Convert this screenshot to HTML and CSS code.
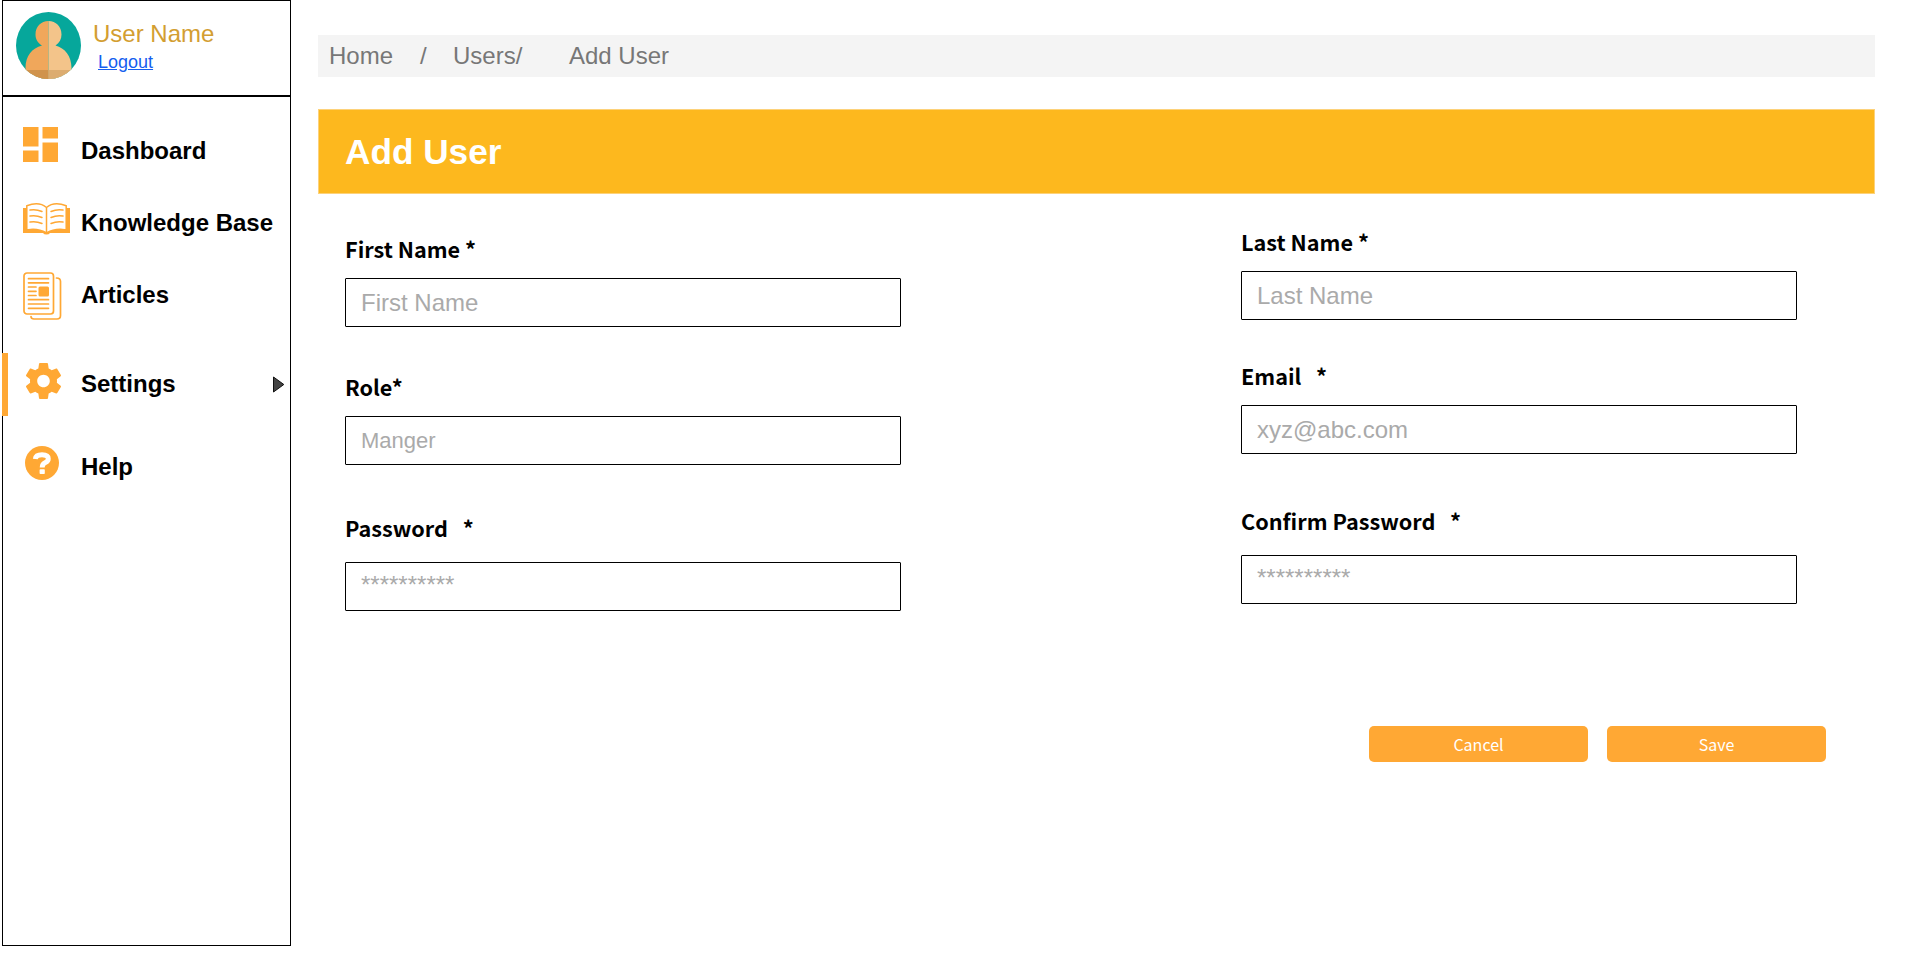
FILE: index.html
```html
<!DOCTYPE html>
<html lang="en">
<head>
<meta charset="utf-8">
<title>Add User</title>
<link rel="stylesheet" href="styles.css">
</head>
<body>
<div class="app">
  <aside class="sidebar">
    <div class="profile">
      <svg class="avatar" width="65" height="67" viewBox="0 0 65 67">
        <defs>
          <clipPath id="disc"><ellipse cx="32.500" cy="33.500" rx="32.500" ry="33.500"/></clipPath>
          <clipPath id="person"><path d="M32.500 9C25 9 19.500 14.500 19.500 22.500C19.500 27 21.500 31 26 33.500C16 36 9.500 44 9.500 56V67H55.500V56C55.500 44 49 36 39.500 33.500C43.500 31 45.500 27 45.500 22.500C45.500 14.500 40 9 32.500 9Z"/></clipPath>
        </defs>
        <g clip-path="url(#disc)">
          <rect width="65" height="67" fill="#06a79b"/>
          <g clip-path="url(#person)">
            <rect width="32.500" height="67" fill="#f0a75b"/>
            <rect x="32.500" width="33" height="67" fill="#f3c48a"/>
            <rect y="58" width="32.500" height="9" fill="#d0934c"/>
            <rect x="32.500" y="58" width="33" height="9" fill="#dcac70"/>
          </g>
        </g>
      </svg>
      <div class="identity">
        <span class="user-name">User Name</span>
        <a class="logout" href="#">Logout</a>
      </div>
    </div>
    <nav class="nav">
      <a class="nav-item dashboard">
        <svg class="icon" width="35" height="35" viewBox="0 0 35 35" fill="#ffa834"><path d="M0 0H15.500V19.500H0ZM19.500 0H35V11.500H19.500ZM19.500 15.500H35V35H19.500ZM0 23.500H15.500V35H0Z"/></svg>
        <span class="nav-label">Dashboard</span>
      </a>
      <a class="nav-item knowledge">
        <svg class="icon" width="47" height="32" viewBox="0 0 47 32">
          <path d="M0 5H4V26Q15 24 23.500 29Q32 24 43 26V5H47V30H27Q26 31.500 23.500 31.500T20 30H0Z" fill="#ffa834"/>
          <path d="M3.800 26V3Q16-2 23.500 4.500Q31-2 43.200 3V26Q32 22.500 23.500 28Q15 22.500 3.800 26Z" fill="#fff"/>
          <g fill="none" stroke="#ffa834" stroke-width="1.500" stroke-linecap="round"><path d="M3.800 26V2.800Q16-1.800 23.500 4.500Q31-1.800 43.200 2.800V26M23.500 4.500V29"/><path d="M7 7Q13 5.800 19 8.500M7 13Q13 11.800 19 14.500M7 19Q13 17.800 19 20.500M40 7Q34 5.800 28 8.500M40 13Q34 11.800 28 14.500M40 19Q34 17.800 28 20.500"/></g>
        </svg>
        <span class="nav-label">Knowledge Base</span>
      </a>
      <a class="nav-item articles">
        <svg class="icon" width="39" height="48" viewBox="0 0 39 48" fill="none" stroke="#ffa834" stroke-width="1.700" stroke-linecap="round">
          <rect x="1" y="1" width="29.500" height="41" rx="3"/>
          <path d="M33.500 6Q37.500 6 37.500 9.500V43.500Q37.500 47 34 47H11Q8 47 8 44.500"/>
          <path d="M5.500 6.700H25.500M5.500 10.800H25.500M5.500 15H13M5.500 19.300H13M5.500 23.500H13M5.500 27.700H25.500M5.500 32H25.500M5.500 36.300H25.500"/>
          <rect x="15.500" y="14.500" width="10.500" height="10" rx="1.500" fill="#ffa834" stroke="none"/>
        </svg>
        <span class="nav-label">Articles</span>
      </a>
      <a class="nav-item settings">
        <svg class="icon" width="35" height="36" viewBox="2.270 2 19.460 20" preserveAspectRatio="none" fill="#ffa834"><path d="M19.430 12.980c.04-.32.07-.64.07-.98s-.03-.66-.07-.98l2.110-1.650c.19-.15.24-.42.12-.64l-2-3.460c-.12-.22-.39-.3-.61-.22l-2.490 1c-.52-.4-1.080-.73-1.690-.98l-.38-2.650C14.460 2.180 14.250 2 14 2h-4c-.25 0-.46.18-.49.42l-.38 2.650c-.61.25-1.170.59-1.690.98l-2.490-1c-.23-.09-.49 0-.61.22l-2 3.460c-.13.22-.07.49.12.64l2.110 1.650c-.04.32-.07.65-.07.98s.03.66.07.98l-2.110 1.650c-.19.15-.24.42-.12.64l2 3.460c.12.22.39.3.61.22l2.490-1c.52.4 1.080.73 1.690.98l.38 2.650c.03.24.24.42.49.42h4c.25 0 .46-.18.49-.42l.38-2.650c.61-.25 1.170-.59 1.690-.98l2.490 1c.23.09.49 0 .61-.22l2-3.460c.12-.22.07-.49-.12-.64l-2.110-1.650zM12 15.500c-1.930 0-3.500-1.570-3.500-3.500s1.570-3.500 3.500-3.500 3.500 1.570 3.500 3.500-1.570 3.500-3.500 3.500z"/></svg>
        <span class="nav-label">Settings</span>
        <svg class="caret" width="12" height="17" viewBox="0 0 12 17"><path d="M.500 1V16L10.800 8.500Z" fill="#444" stroke="#111"/></svg>
      </a>
      <a class="nav-item help">
        <svg class="icon" width="34" height="34" viewBox="0 0 34 34"><circle cx="17" cy="17" r="17" fill="#ffa834"/><path d="M10.300 13Q10.800 8.700 17 8.700Q23.300 8.700 23.300 12.800Q23.300 15.300 20.400 16.600Q17.200 18.100 17.200 21.500" fill="none" stroke="#fff" stroke-width="4.900"/><rect x="14.600" y="23.300" width="5.200" height="4.700" rx=".8" fill="#fff"/></svg>
        <span class="nav-label">Help</span>
      </a>
    </nav>
  </aside>
  <main class="content">
    <div class="breadcrumb"><span class="crumb-home">Home</span><span class="crumb-sep">/</span><span class="crumb-users">Users/</span><span>Add User</span></div>
    <h1 class="title">Add User</h1>
    <form class="form">
      <div class="column left">
        <div class="field"><label>First Name *</label><input placeholder="First Name"></div>
        <div class="field"><label>Role*</label><input class="role-input" placeholder="Manger"></div>
        <div class="field password"><label>Password &nbsp;&nbsp;*</label><input placeholder="**********"></div>
      </div>
      <div class="column right">
        <div class="field"><label>Last Name *</label><input placeholder="Last Name"></div>
        <div class="field"><label>Email &nbsp;&nbsp;*</label><input placeholder="xyz@abc.com"></div>
        <div class="field password"><label>Confirm Password &nbsp;&nbsp;*</label><input placeholder="**********"></div>
      </div>
    </form>
    <div class="actions">
      <button type="button">Cancel</button>
      <button type="button">Save</button>
    </div>
  </main>
</div>
</body>
</html>
```
FILE: styles.css
```css
* { box-sizing: border-box; }
body {
  margin: 0;
  background: #fff;
  font-family: "Liberation Sans", Arial, sans-serif;
  font-size: 24px;
  line-height: 28px;
}
.app { display: flex; height: 955px; padding-left: 2px; }
.sidebar {
  flex: none;
  width: 289px;
  height: 946px;
  border: 1px solid #000;
}
.profile {
  display: flex;
  height: 96px;
  padding: 11px 0 0 13px;
  border-bottom: 2px solid #000;
}
.avatar { display: block; flex: none; }
.identity { display: flex; flex-direction: column; align-items: flex-start; padding: 8px 0 0 12px; }
.user-name { color: #d39e31; }
.logout { margin-left: 5px; font-size: 18px; line-height: 29px; color: #155eef; text-decoration: underline; }

.nav { display: flex; flex-direction: column; }
.nav-item {
  display: flex;
  align-items: flex-start;
  height: 72px;
  padding-left: 20px;
  color: #000;
  font-weight: bold;
}
.icon { display: block; flex: none; }
.nav-label { padding-top: 10px; }
.dashboard { margin-top: 30px; height: 77px; }
.dashboard .nav-label { margin-left: 23px; }
.knowledge { height: 68px; }
.knowledge .icon { margin-top: -1px; }
.knowledge .nav-label { margin-left: 11px; padding-top: 5px; }
.articles { height: 81px; }
.articles .nav-label { margin-left: 19px; padding-top: 9px; }
.settings {
  height: 63px;
  margin-left: -1px;
  padding: 10px 0 0 17.500px;
  border-left: 6.500px solid #ffa834;
}
.settings .nav-label { margin-left: 20.500px; padding-top: 7px; }
.settings .caret { margin: 13px 5px 0 auto; }
.help { margin-top: 30px; padding-left: 22px; }
.help .nav-label { margin-left: 22px; padding-top: 7px; }

.content { width: 1557px; margin-left: 27px; padding-top: 35px; }
.breadcrumb {
  display: flex;
  height: 42px;
  padding: 7px 0 0 11px;
  background: #f4f4f4;
  color: #777;
}
.crumb-home { width: 91px; }
.crumb-sep { width: 33px; }
.crumb-users { width: 116px; }
.title {
  height: 85px;
  margin: 32px 0 0;
  padding: 22px 0 0 26px;
  border: 1px solid #fdd27a;
  background: #fdb81e;
  color: #fff;
  font-size: 35.200px;
  line-height: 40px;
}
.form { display: flex; justify-content: space-between; padding: 0 78px 0 27px; }
.column { width: 556px; }
.left { padding-top: 39px; }
.right { padding-top: 32px; }
.field { display: flex; flex-direction: column; }
label {
  height: 45px;
  color: #000;
  font-family: "Noto Sans CJK JP", sans-serif;
  font-size: 21.650px;
  font-weight: bold;
  line-height: 32px;
}
input {
  height: 49px;
  margin: 0 0 44px;
  padding: 0 15px;
  border: 1px solid #000;
  border-radius: 1px;
  background: #fff;
  font: 24px/27px "Liberation Sans", Arial, sans-serif;
}
input::placeholder { color: #aaa; opacity: 1; }
.role-input { font-size: 22px; }
.left .field:nth-child(2) input { margin-bottom: 47px; }
.right .field:nth-child(2) input { margin-bottom: 51px; }
.right .field:nth-child(1) input { margin-bottom: 40px; }
.password label { height: 50px; }
.password input { margin-bottom: 0; padding-bottom: 3px; }
.actions { display: flex; justify-content: flex-end; gap: 19px; padding: 115px 49px 0 0; }
button {
  width: 219px;
  height: 36px;
  padding: 0;
  border: 0;
  border-radius: 5px;
  background: #ffa834;
  color: #fff;
  font: 16px/36px "Noto Sans CJK JP", sans-serif;
}
```
